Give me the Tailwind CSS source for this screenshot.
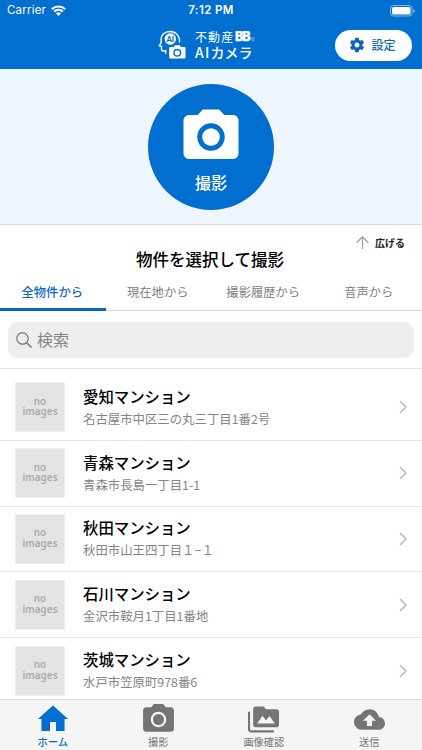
<!DOCTYPE html>
<html lang="ja">
<head>
    <meta charset="UTF-8">
    <meta name="viewport" content="width=device-width, initial-scale=1.0">
    <title>不動産BB AIカメラ</title>
    <script src="https://cdn.jsdelivr.net/npm/@tailwindcss/browser@4"></script>
</head>

<body class="bg-white font-['Noto_Sans_CJK_JP',sans-serif]">
<div class="flex flex-col w-[422px] h-[750px] overflow-hidden">

    <!-- header -->
    <header class="h-[69px] shrink-0 bg-[#006fcf] text-white">
        <div class="grid grid-cols-3 items-center h-[22px] px-[7px] font-['Inter',sans-serif] text-[11.5px]">
            <div class="flex items-center gap-[5px]">
                <span class="tracking-[0.2px]">Carrier</span>
                <svg class="w-[15px] h-[11px] mb-[2px]" viewBox="0 0 15 11" fill="none" stroke="currentColor" stroke-width="2">
                    <path d="M.8 4.2a9.6 9.6 0 0 1 13.4 0M3.1 6.6a6.2 6.2 0 0 1 8.8 0"/>
                    <path d="M7.5 11 5 8.5a3.6 3.6 0 0 1 5 0z" fill="currentColor" stroke="none"/>
                </svg>
            </div>
            <span class="text-center font-semibold tracking-[0.4px]">7:12 PM</span>
            <svg class="justify-self-end w-[25px] h-[12px]" viewBox="0 0 25 12">
                <rect x=".5" y=".5" width="21.5" height="10.5" rx="3" fill="none" stroke="#fff" stroke-opacity=".5"/>
                <rect x="2" y="2" width="18.5" height="7.5" rx="1.6" fill="#fff"/>
                <path d="M23.3 4v4c.8-.3 1.2-1.1 1.2-2s-.4-1.7-1.2-2z" fill="#fff" fill-opacity=".6"/>
            </svg>
        </div>
        <div class="grid grid-cols-[158px_1fr_87px] items-center h-[46px]">
            <span></span>
            <div class="flex items-center gap-[9px]">
                <svg class="w-[28px] h-[30px]" viewBox="0 0 28 30" fill="none">
                    <path d="M21.5 12.5C22 5.5 17.500 1.500 12 1.500 6.500 1.500 3 5 3 9.800L3.300 12 1.300 15.800l2.200.7v2.800c0 1 .8 1.800 1.800 1.700l2.400-.2v3" stroke="#fff" stroke-width="1.400"/>
                    <circle cx="12.300" cy="9" r="5.700" fill="#fff"/>
                    <text x="12.300" y="11.800" font-size="7.800" font-weight="900" text-anchor="middle" fill="#006fcf" font-family="Lato, sans-serif">AI</text>
                    <path d="M12.500 17h3l1.300-1.800h5L23 17h3.200c.8 0 1.300.5 1.300 1.300v9c0 .8-.5 1.300-1.300 1.300H12.500c-.8 0-1.300-.5-1.300-1.300v-9c0-.8.5-1.300 1.300-1.300z" fill="#fff"/>
                    <circle cx="19.300" cy="22.700" r="3.300" stroke="#006fcf" stroke-width="1.500"/>
                </svg>
                <div class="flex flex-col">
                    <div class="flex items-center h-[14px] text-[12px] leading-[12px] tracking-[1.1px]">
                        <span>不動産</span>
                        <svg class="w-[21px] h-[12px] ml-[1px]" viewBox="0 0 21 12">
                            <text x="0" y="10.300" font-size="12.500" font-weight="800" letter-spacing="-1" fill="#fff" stroke="#fff" stroke-width=".4" font-family="Inter, sans-serif">BB</text>
                            <path d="M17 6v4.500M18.800 6v4.500" stroke="#fff" stroke-opacity=".5" stroke-width=".9"/>
                        </svg>
                    </div>
                    <div class="h-[16px] whitespace-nowrap text-[14px] font-medium leading-[16px]"><span class="tracking-[1.2px]">AI</span>カメラ</div>
                </div>
            </div>
            <button class="flex items-center justify-center gap-[5px] w-[77px] h-[31px] pr-[3px] rounded-full bg-white text-[#0b66b8]">
                <svg class="w-[18px] h-[18px]" viewBox="0 0 24 24" fill="currentColor">
                    <path d="M19.140 12.940c.04-.3.060-.61.060-.94 0-.32-.020-.64-.070-.94l2.030-1.580c.18-.14.23-.41.12-.61l-1.920-3.320c-.12-.22-.37-.29-.59-.22l-2.390.96c-.5-.38-1.030-.7-1.620-.94l-.36-2.540c-.04-.24-.24-.41-.48-.41h-3.840c-.24 0-.43.17-.47.41l-.36 2.540c-.59.24-1.130.57-1.620.94l-2.390-.96c-.22-.08-.47 0-.59.22L2.740 8.870c-.12.21-.08.47.12.61l2.030 1.580c-.05.3-.09.63-.09.94s.020.64.070.94l-2.030 1.580c-.18.14-.23.41-.12.61l1.920 3.320c.12.22.37.29.59.22l2.390-.96c.5.38 1.030.7 1.620.94l.36 2.540c.05.24.24.41.48.41h3.840c.24 0 .44-.17.470-.41l.36-2.540c.59-.24 1.130-.56 1.620-.94l2.390.96c.22.08.47 0 .59-.22l1.920-3.320c.12-.22.070-.47-.12-.61l-2.010-1.580zM12 15.200c-1.760 0-3.200-1.440-3.200-3.200s1.440-3.200 3.200-3.200 3.200 1.440 3.200 3.200-1.440 3.200-3.200 3.200z"/>
                </svg>
                <span class="pb-[1px] text-[12px] font-medium leading-none">設定</span>
            </button>
        </div>
    </header>

    <!-- shoot button -->
    <section class="flex items-center justify-center h-[156px] shrink-0 bg-[#eef7ff] border-b border-[#d3dcea]">
        <button class="flex flex-col items-center w-[126px] h-[126px] pt-[20px] rounded-full bg-[#006fcf] text-white">
            <svg class="w-[66px] h-[66px]" viewBox="0 0 24 24" fill="currentColor">
                <circle cx="12" cy="12" r="3.200"/>
                <path d="M9 2 7.170 4H4c-1.100 0-2 .9-2 2v12c0 1.100.9 2 2 2h16c1.100 0 2-.9 2-2V6c0-1.100-.9-2-2-2h-3.170L15 2H9zm3 15c-2.760 0-5-2.240-5-5s2.240-5 5-5 5 2.240 5 5-2.240 5-5 5z"/>
            </svg>
            <span class="mt-[3px] text-[16px] font-medium leading-[18px]">撮影</span>
        </button>
    </section>

    <!-- title + tabs -->
    <section class="h-[86px] shrink-0">
        <div class="flex justify-end items-center gap-[6px] h-[22px] pt-[13px] pr-[17px]">
            <svg class="w-[13px] h-[13px]" viewBox="0 0 13 13" fill="none" stroke="#a0a0a0" stroke-width="1.300">
                <path d="M6.500 13V1M.6 6.800l5.900-6 5.900 6"/>
            </svg>
            <span class="text-[10px] font-bold leading-none text-[#222]">広げる</span>
        </div>
        <h1 class="h-[25px] pr-[2px] text-center text-[16.5px] font-medium leading-[24px] text-black">物件を選択して撮影</h1>
        <nav class="grid grid-cols-4 h-[39px] border-b border-[#d3d9e6] text-center text-[12.3px] leading-[41px] text-[#808080]">
            <a class="h-[39px] border-b-3 border-[#0b68c0] pr-[1px] font-medium text-[#0b68c0]">全物件から</a>
            <a class="pr-[1px]">現在地から</a>
            <a class="pr-[1px]">撮影履歴から</a>
            <a class="pr-[1px]">音声から</a>
        </nav>
    </section>

    <!-- search -->
    <section class="h-[58px] shrink-0 px-[8px] pt-[11px] border-b border-[#e8e8e8]">
        <div class="flex items-center gap-[5px] h-[36px] pl-[8px] rounded-[10px] bg-[#eee] text-[#858585]">
            <svg class="w-[16px] h-[16px]" viewBox="0 0 16 16" fill="none" stroke="currentColor" stroke-width="1.400">
                <circle cx="6.500" cy="6.500" r="5.700"/>
                <path d="m10.600 10.600 4.900 4.900" stroke-width="1.700"/>
            </svg>
            <span class="pb-[2px] text-[16px] leading-none">検索</span>
        </div>
    </section>

    <!-- property list -->
    <ul id="list" class="flex-1 min-h-0 overflow-hidden pt-[6px]"></ul>

    <!-- bottom tabs -->
    <footer class="grid grid-cols-4 h-[51px] shrink-0 border-t border-[#dcdcdc] bg-[#f5f5f5] text-center text-[10.2px] leading-[14px] text-[#757575]">
        <a class="flex flex-col items-center font-medium text-[#006fcf]">
            <span class="flex items-center h-[35px] pt-[3px]">
                <svg class="w-[36px] h-[36px]" viewBox="0 0 24 24" fill="currentColor"><path d="M10 20v-6h4v6h5.700v-8H22L12 3 2 12h2.300v8z"/></svg>
            </span>
            ホーム
        </a>
        <a class="flex flex-col items-center">
            <span class="flex items-center h-[35px] pt-[3px]">
                <svg class="w-[37px] h-[37px]" viewBox="0 0 24 24" fill="currentColor"><path d="M9 2 7.170 4H4c-1.100 0-2 .9-2 2v12c0 1.100.9 2 2 2h16c1.100 0 2-.9 2-2V6c0-1.100-.9-2-2-2h-3.170L15 2H9zm3 15c-2.760 0-5-2.240-5-5s2.240-5 5-5 5 2.240 5 5-2.240 5-5 5z"/><circle cx="12" cy="12" r="3.600"/></svg>
            </span>
            撮影
        </a>
        <a class="flex flex-col items-center">
            <span class="flex items-center h-[35px] pt-[3px]">
                <svg class="w-[31px] h-[31px]" viewBox="0 0 24 24" fill="currentColor"><path d="M1.600 6H0v14c0 1.100.9 2 2 2h18v-1.600H1.600V6zM22 4h-8l-2-2H6c-1.100 0-2 .9-2 2v12c0 1.100.9 2 2 2h16c1.100 0 2-.9 2-2V6c0-1.100-.9-2-2-2zM7.200 15l4-6 2.700 3.800L16.600 9.300 20.900 15z"/></svg>
            </span>
            画像確認
        </a>
        <a class="flex flex-col items-center">
            <span class="flex items-center h-[35px] pt-[3px]">
                <svg class="w-[31px] h-[31px]" viewBox="0 0 24 24" fill="currentColor"><path d="M19.350 10.040C18.670 6.590 15.640 4 12 4 9.110 4 6.600 5.640 5.350 8.040 2.340 8.360 0 10.910 0 14c0 3.310 2.690 6 6 6h13c2.760 0 5-2.240 5-5 0-2.640-2.050-4.780-4.650-4.960zM14 13v4h-4v-4H7l5-5 5 5h-3z"/></svg>
            </span>
            送信
        </a>
    </footer>
</div>

<script>
    const items = [
        ['愛知マンション', '名古屋市中区三の丸三丁目1番2号'],
        ['青森マンション', '青森市長島一丁目1-1'],
        ['秋田マンション', '秋田市山王四丁目１−１'],
        ['石川マンション', '金沢市鞍月1丁目1番地'],
        ['茨城マンション', '水戸市笠原町978番6'],
    ]

    document.getElementById('list').innerHTML = items.map(([name, address]) => `
        <li class="flex items-center h-[65.8px] px-[15px] border-b border-[#e8e8e8]">
            <div class="flex items-center justify-center w-[50px] h-[50px] border border-[#ededed] bg-[#e4e4e4]">
                <p class="text-center font-['Noto_Sans',sans-serif] text-[9.8px] font-semibold leading-[10.5px] tracking-[0.1px] text-[#aaa]">no<br>images</p>
            </div>
            <div class="flex-1 ml-[18px]">
                <p class="text-[15.4px] font-medium leading-[22px] text-black">${name}</p>
                <p class="mt-[1px] text-[12.4px] leading-[22px] text-[#858585]">${address}</p>
            </div>
            <svg class="w-[8px] h-[14px]" viewBox="0 0 8 14" fill="none" stroke="#c6c6c6" stroke-width="1.800"><path d="m1 1 6 6-6 6"/></svg>
        </li>`).join('')
</script>
</body>
</html>
